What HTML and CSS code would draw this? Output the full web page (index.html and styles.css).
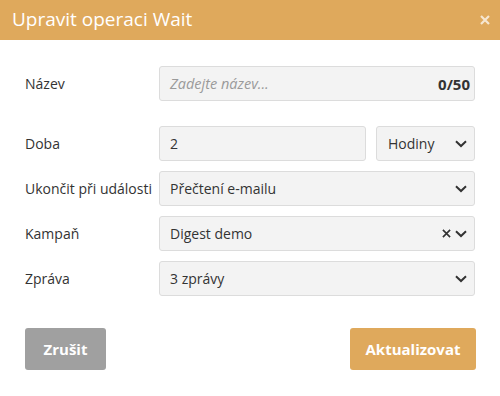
FILE: index.html
```html
<!DOCTYPE html>
<html lang="cs">
<head>
<meta charset="utf-8">
<link rel="stylesheet" href="styles.css">
</head>
<body>
<div class="dialog">
  <div class="header">
    <span class="title">Upravit operaci Wait</span>
    <svg class="close" viewBox="0 0 10 10" width="10" height="10"><path d="M1 1 L9 9 M9 1 L1 9" fill="none" stroke="rgba(255,255,255,0.72)" stroke-width="2.2"/></svg>
  </div>
  <div class="body">
    <div class="row row-name">
      <div class="label">Název</div>
      <div class="field input name">
        <span class="placeholder">Zadejte název...</span>
        <span class="counter">0/50</span>
      </div>
    </div>
    <div class="row">
      <div class="label">Doba</div>
      <div class="split">
        <div class="field input grow"><span class="value">2</span></div>
        <div class="field select small">
          <span class="value">Hodiny</span>
          <svg class="chev" viewBox="0 0 12 8" width="12" height="8"><path d="M1 1.2 L6 6 L11 1.2" fill="none" stroke="#333" stroke-width="2"/></svg>
        </div>
      </div>
    </div>
    <div class="row">
      <div class="label">Ukončit při události</div>
      <div class="field select">
        <span class="value">Přečtení e-mailu</span>
        <svg class="chev" viewBox="0 0 12 8" width="12" height="8"><path d="M1 1.2 L6 6 L11 1.2" fill="none" stroke="#333" stroke-width="2"/></svg>
      </div>
    </div>
    <div class="row">
      <div class="label">Kampaň</div>
      <div class="field select">
        <span class="value">Digest demo</span>
        <svg class="clear" viewBox="0 0 10 10" width="9" height="9"><path d="M1 1 L9 9 M9 1 L1 9" fill="none" stroke="#333" stroke-width="1.8"/></svg>
        <svg class="chev tight" viewBox="0 0 12 8" width="12" height="8"><path d="M1 1.2 L6 6 L11 1.2" fill="none" stroke="#333" stroke-width="2"/></svg>
      </div>
    </div>
    <div class="row">
      <div class="label">Zpráva</div>
      <div class="field select">
        <span class="value">3 zprávy</span>
        <svg class="chev" viewBox="0 0 12 8" width="12" height="8"><path d="M1 1.2 L6 6 L11 1.2" fill="none" stroke="#333" stroke-width="2"/></svg>
      </div>
    </div>
    <div class="footer">
      <button class="btn btn-cancel">Zrušit</button>
      <button class="btn btn-primary">Aktualizovat</button>
    </div>
  </div>
</div>
</body>
</html>
```
FILE: styles.css
```css
* { box-sizing: border-box; }
html, body { margin: 0; padding: 0; background: #fff; }
body { font-family: "Open Sans", "Noto Sans", sans-serif; color: #333; }
.dialog {
  width: 500px;
  height: 396px;
  background: #fff;
  border-radius: 0 0 4px 4px;
  overflow: hidden;
}
.header {
  height: 40px;
  background: #dfa95c;
  display: flex;
  align-items: center;
  justify-content: space-between;
  padding: 0 10px 0 12px;
}
.title {
  color: #fff;
  font-size: 19px;
  line-height: 1;
  margin-top: -2px;
}
.close { flex: none; margin-top: -1px; }
.body {
  padding: 26px 25px 0 25px;
}
.row {
  display: flex;
  align-items: center;
  height: 35px;
  margin-bottom: 10px;
}
.row-name { margin-bottom: 25px; }
.label {
  width: 134px;
  flex: none;
  font-size: 14px;
  color: #333;
}
.field {
  flex: 1;
  height: 35px;
  background: #f3f3f3;
  border: 1px solid #dcdcdc;
  border-radius: 3px;
  display: flex;
  align-items: center;
  padding: 0 10px;
  font-size: 14px;
}
.name { padding-right: 4px; }
.placeholder { color: #9a9a9a; font-style: italic; flex: 1; font-size: 14.5px; }
.counter { font-weight: bold; color: #333; font-size: 15px; }
.value { flex: 1; color: #333; }
.split { flex: 1; display: flex; gap: 10px; height: 35px; }
.grow { flex: 1; }
.small { flex: none; width: 99px; padding-left: 11px; }
.chev { flex: none; margin-right: -3px; }
.clear { flex: none; margin-right: 4px; }
.footer {
  display: flex;
  justify-content: space-between;
  margin-top: 32px;
}
.btn {
  height: 42px;
  border: none;
  border-radius: 3px;
  color: #fff;
  font-family: "Open Sans", "Noto Sans", sans-serif;
  font-weight: bold;
  font-size: 15px;
  padding: 0;
}
.btn-cancel { background: #a0a0a0; width: 81px; }
.btn-primary { background: #dfa95c; width: 126px; margin-right: -1px; }
```
